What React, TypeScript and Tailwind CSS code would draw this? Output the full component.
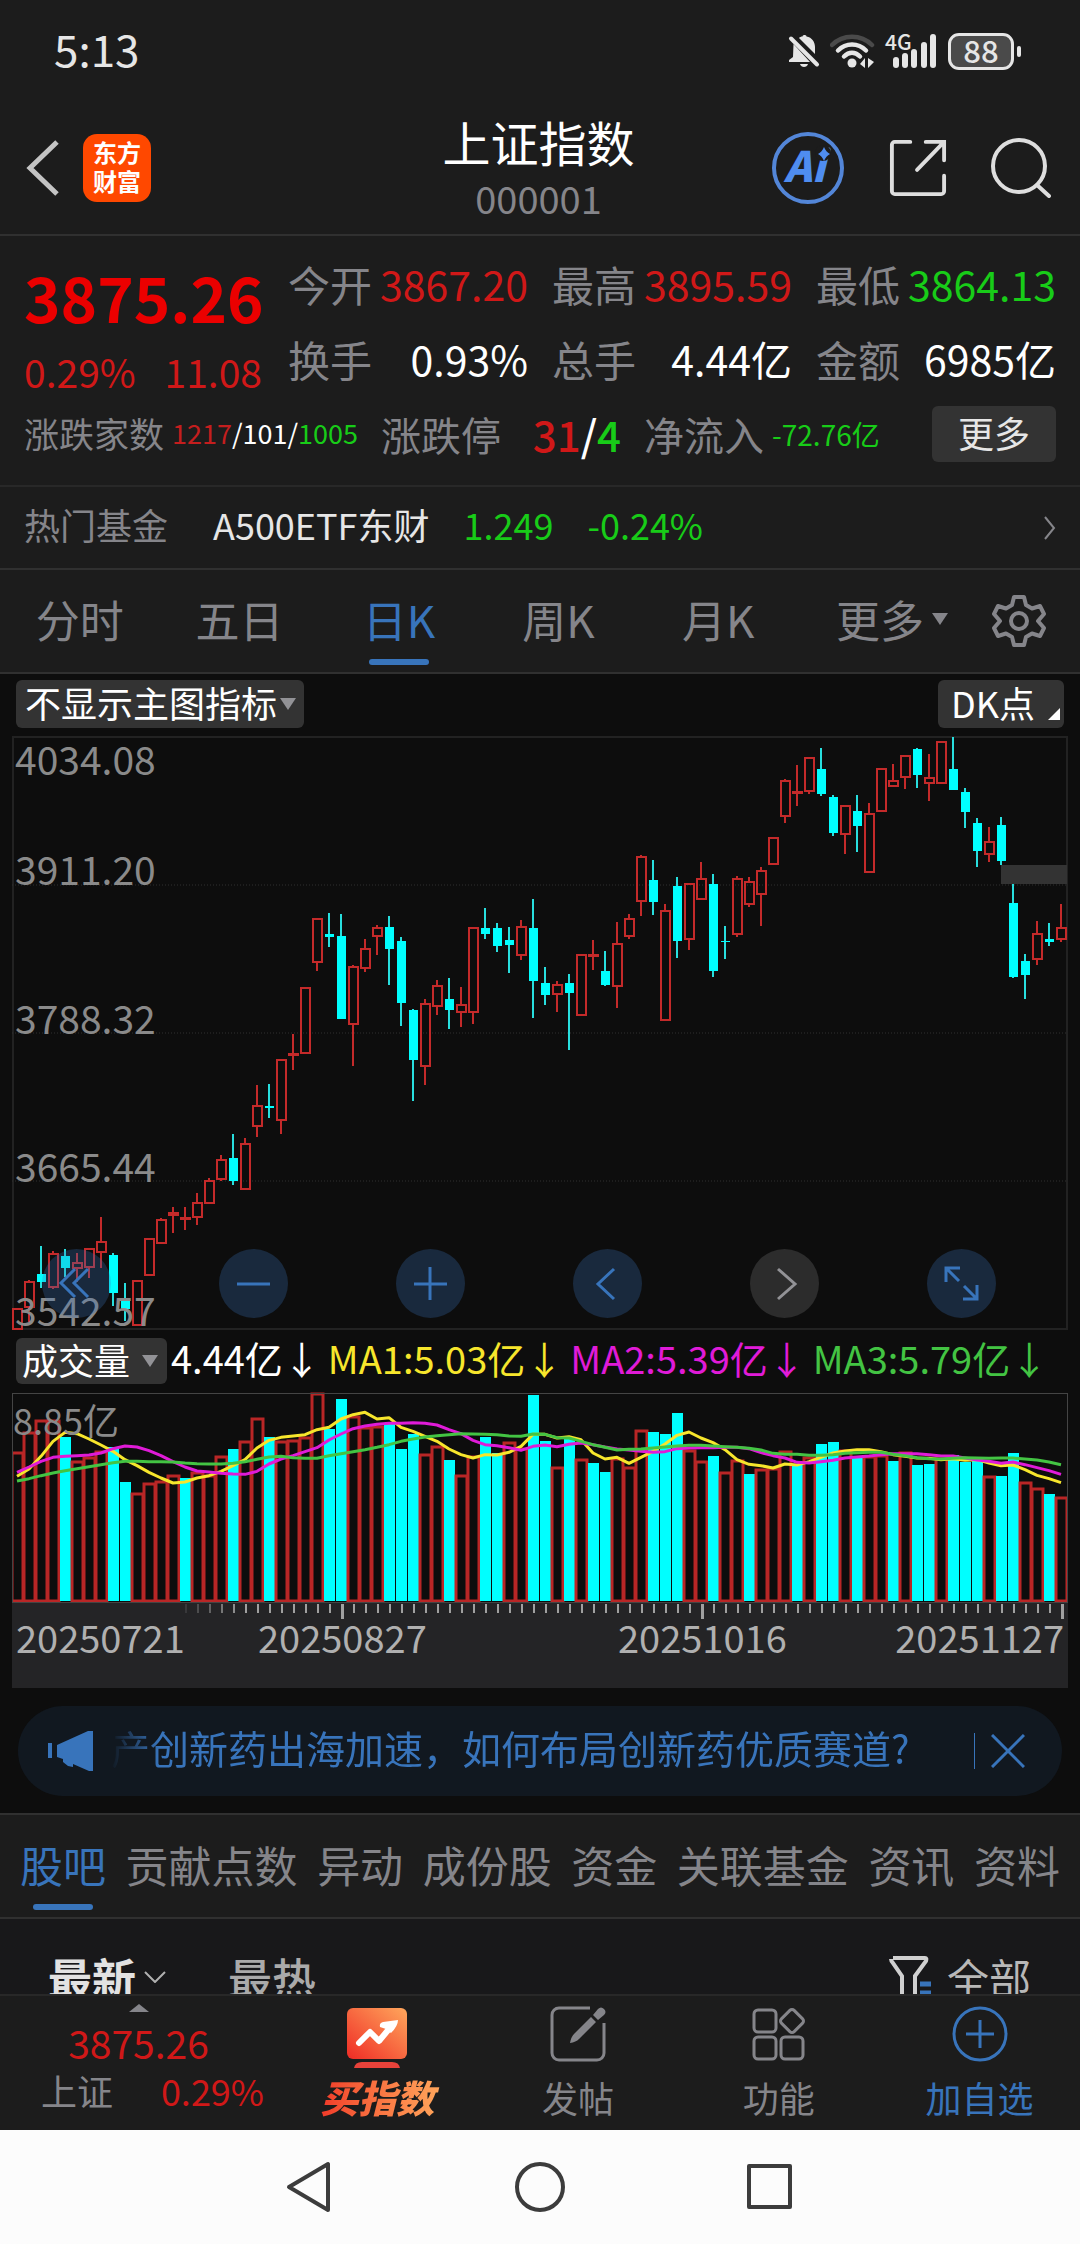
import React, { useState } from 'react';

// [涨/跌, 最高, 实体上沿, 实体下沿, 最低]，数值为距离图表顶部的刻度
type Candle = ['r' | 'c', number, number, number, number];

const CANDLES: Candle[] = [
    ['r', 1488, 1488, 1540, 1540], ['r', 1412, 1418, 1482, 1520], ['c', 1325, 1398, 1419, 1433], ['r', 1338, 1346, 1432, 1436],
    ['c', 1334, 1351, 1383, 1405], ['r', 1345, 1370, 1382, 1418], ['r', 1330, 1333, 1380, 1408], ['r', 1252, 1315, 1340, 1383],
    ['c', 1344, 1350, 1446, 1480], ['c', 1421, 1466, 1487, 1519], ['r', 1412, 1416, 1529, 1530], ['r', 1306, 1309, 1400, 1403],
    ['r', 1255, 1258, 1317, 1320], ['r', 1225, 1242, 1247, 1293], ['r', 1225, 1255, 1257, 1285], ['r', 1189, 1216, 1250, 1271],
    ['r', 1151, 1158, 1216, 1216], ['r', 1091, 1105, 1153, 1158], ['c', 1039, 1100, 1158, 1170], ['r', 1047, 1064, 1180, 1183],
    ['r', 912, 966, 1017, 1046], ['c', 910, 966, 970, 997], ['r', 845, 849, 1003, 1037], ['r', 781, 833, 835, 873],
    ['r', 663, 663, 831, 831], ['r', 483, 485, 596, 619], ['c', 470, 523, 531, 558], ['c', 474, 528, 742, 742],
    ['r', 604, 608, 755, 864], ['r', 536, 563, 612, 621], ['r', 500, 508, 528, 577], ['c', 479, 505, 563, 655],
    ['c', 532, 542, 702, 760], ['c', 717, 720, 849, 953], ['r', 691, 704, 863, 913], ['r', 642, 659, 710, 733],
    ['c', 637, 692, 720, 769], ['r', 661, 706, 725, 762], ['r', 508, 510, 725, 755], ['c', 457, 510, 523, 536],
    ['c', 497, 508, 556, 571], ['c', 506, 540, 552, 625], ['r', 488, 506, 578, 591], ['c', 434, 508, 645, 740],
    ['c', 610, 650, 681, 707], ['r', 646, 654, 678, 724], ['c', 626, 650, 676, 823], ['r', 575, 577, 731, 731],
    ['r', 539, 578, 581, 617], ['c', 569, 620, 656, 657], ['r', 493, 549, 658, 714], ['r', 474, 485, 528, 538],
    ['r', 322, 327, 440, 477], ['c', 333, 386, 442, 476], ['r', 447, 466, 744, 746], ['c', 377, 401, 541, 585],
    ['r', 394, 396, 536, 566], ['r', 338, 382, 433, 436], ['c', 369, 396, 620, 634], ['c', 503, 541, 545, 588],
    ['r', 375, 382, 525, 531], ['r', 377, 390, 448, 454], ['r', 353, 363, 422, 504], ['r', 275, 277, 345, 346],
    ['r', 127, 131, 221, 238], ['r', 91, 160, 163, 195], ['r', 71, 73, 156, 164], ['c', 45, 100, 164, 170],
    ['c', 166, 171, 264, 272], ['r', 194, 196, 268, 319], ['c', 168, 207, 247, 314], ['r', 187, 217, 366, 367],
    ['r', 97, 99, 208, 209], ['r', 87, 131, 143, 144], ['r', 64, 66, 120, 152], ['c', 46, 50, 115, 149],
    ['r', 61, 123, 135, 183], ['r', 30, 32, 136, 139], ['c', 18, 101, 153, 154], ['c', 148, 159, 210, 251],
    ['c', 226, 240, 310, 351], ['r', 248, 287, 318, 339], ['c', 224, 245, 337, 348], ['c', 396, 445, 635, 637],
    ['c', 576, 594, 630, 691], ['r', 490, 525, 588, 603], ['c', 497, 536, 545, 554], ['r', 447, 508, 538, 544],
];

const VOLUMES = [
    367, 308, 270, 270, 322, 393, 382, 365, 353, 456, 490, 461, 453, 436, 445, 428, 435, 380, 357, 335, 265, 323,
    335, 330, 322, 190, 297, 208, 258, 292, 290, 283, 359, 314, 372, 348, 391, 436, 380, 322, 370, 338, 355, 196,
    333, 411, 325, 387, 399, 426, 385, 411, 300, 307, 313, 249, 360, 393, 379, 426, 390, 432, 418, 415, 363, 405,
    383, 343, 337, 360, 380, 380, 375, 393, 366, 405, 402, 385, 376, 398, 395, 438, 438, 369, 458, 476, 492, 502,
];

// 下跌日的序号
const DOWN_DAYS = [
    4, 8, 9, 14, 18, 21, 26, 27, 31, 32, 33, 36, 39, 40, 43, 44, 46, 48, 49, 53, 54, 55, 58, 61, 65, 67, 68, 70, 73,
    75, 76, 78, 79, 80, 82, 83, 86,
];

const MA1 = [
    440, 418, 380, 335, 308, 312, 328, 346, 365, 390, 408, 428, 445, 460, 457, 445, 438, 425, 408, 390, 355, 332,
    323, 319, 315, 300, 293, 268, 255, 248, 268, 264, 293, 305, 320, 335, 358, 375, 385, 375, 376, 368, 350, 314,
    314, 325, 321, 330, 370, 388, 383, 401, 383, 365, 343, 317, 307, 325, 339, 360, 390, 404, 408, 415, 403, 406,
    396, 383, 370, 364, 360, 360, 366, 375, 380, 385, 386, 390, 387, 392, 390, 400, 408, 406, 420, 437, 447, 459,
];

const MA2 = [
    428, 412, 395, 383, 380, 378, 376, 370, 357, 349, 352, 363, 378, 396, 412, 424, 427, 431, 433, 434, 425, 403,
    388, 378, 366, 354, 331, 313, 297, 289, 284, 281, 281, 279, 281, 286, 300, 312, 332, 345, 348, 354, 362, 350,
    346, 351, 344, 340, 345, 352, 358, 361, 365, 368, 366, 357, 355, 354, 354, 353, 353, 357, 369, 378, 385, 398,
    400, 396, 392, 385, 382, 379, 375, 372, 372, 372, 375, 379, 379, 385, 391, 395, 401, 397, 405, 414, 423, 434,
];

const MA3 = [
    454, 447, 438, 430, 423, 417, 411, 405, 399, 395, 395, 396, 396, 397, 400, 402, 403, 403, 401, 396, 389, 382,
    380, 384, 386, 386, 378, 372, 366, 360, 353, 345, 335, 328, 322, 318, 315, 312, 313, 314, 315, 319, 320, 313,
    314, 324, 325, 335, 345, 353, 361, 359, 358, 355, 352, 349, 347, 347, 349, 351, 353, 356, 361, 371, 374, 374,
    377, 377, 375, 371, 369, 368, 368, 374, 378, 384, 387, 388, 386, 384, 385, 386, 385, 385, 388, 391, 397, 405,
];

const GRID = [
    { y: 39, label: '4034.08' },
    { y: 149, label: '3911.20' },
    { y: 298, label: '3788.32' },
    { y: 446, label: '3665.44' },
    { y: 590, label: '3542.57' },
];

const PERIODS = ['分时', '五日', '日K', '周K', '月K'];
const SECTIONS = ['股吧', '贡献点数', '异动', '成份股', '资金', '关联基金', '资讯', '资料'];

const centerX = (i: number) => 5 + i * 12;
const priceY = (v: number) => Math.round(1 + ((v - 18) * 592) / 1521);
const volumeY = (v: number) => Math.round((v - 187) / 3);
const toPoints = (values: number[]) => values.map((v, i) => `${centerX(i)},${(v - 187) / 3}`).join(' ');

const StatusBar: React.FC = () => (
    <div className="flex h-[102px] items-center justify-between pl-[54px] pr-[59px] text-[#e6e6e6]">
        <span className="pb-[6px] text-[44px] leading-[64px]">5:13</span>
        <div className="flex items-center">
            <svg className="h-9 w-8" viewBox="0 0 32 36" fill="currentColor">
                <path d="M11 5c1-1 2-1.500 3.500-1.500 0-2 4-2 4 0C24 4.500 27 9 27 14v7z" />
                <path d="M5.500 11 22 29H1v-2l4-3z" />
                <path d="M12 31h8c-1 4-7 4-8 0z" />
                <path d="M3 5.500 29 31.500" stroke="currentColor" strokeWidth="4" strokeLinecap="round" />
            </svg>
            <svg className="ml-[10px] h-9 w-[45px]" viewBox="0 0 45 36" fill="none" stroke="currentColor" strokeWidth="4.500">
                <path d="M2 12C13 1 31 1 42 12" stroke="#4a4a4a" strokeLinecap="round" />
                <path d="M8 17.500c8-8 20-8 28 0M14 23.500c5-5 11-5 16 0" strokeLinecap="round" />
                <circle cx="22" cy="30" r="4.500" fill="currentColor" stroke="none" />
                <path d="M35 25v10l-5-4zM38 25v10l6-6z" fill="currentColor" stroke="none" />
            </svg>
            <svg className="ml-[10px] h-9 w-[52px] overflow-visible" viewBox="0 0 52 36" fill="currentColor">
                <text x="0" y="17" fontSize="21" fontWeight="500">4G</text>
                <rect x="8" y="24" width="6" height="11" rx="3" />
                <rect x="17" y="20" width="6" height="15" rx="3" />
                <rect x="26" y="16" width="6" height="19" rx="3" />
                <rect x="36" y="9" width="6" height="26" rx="3" />
                <rect x="45" y="1" width="6" height="34" rx="3" />
            </svg>
            <span className="ml-[11px] flex h-[37px] w-[66px] items-center justify-center rounded-[11px] border-[3px] border-[#e6e6e6] bg-[#4a4a4a] pb-1 text-[31px] font-medium leading-none">
                88
            </span>
            <span className="ml-[3px] h-[11px] w-1 rounded-full bg-[#e6e6e6]" />
        </div>
    </div>
);

const Header: React.FC = () => (
    <header className="grid h-[134px] grid-cols-[1fr_auto_1fr] items-center border-b-2 border-[#303030] pl-[26px] pr-[29px]">
        <div className="flex items-center gap-[23px]">
            <button type="button" aria-label="返回" className="text-[#c4c4c4]">
                <svg className="h-14 w-[34px]" viewBox="0 0 34 56" fill="none" stroke="currentColor" strokeWidth="5">
                    <path d="M31 2 4 28l27 26" />
                </svg>
            </button>
            <a href="#home" className="flex h-[68px] w-[68px] flex-col items-center justify-center rounded-[14px] bg-[#ff4800] pb-1 text-[24px] font-bold leading-[29px] text-white">
                <span>东方</span>
                <span>财富</span>
            </a>
        </div>
        <div className="flex flex-col items-center">
            <h1 className="text-[48px] leading-[60px] text-white">上证指数</h1>
            <p className="text-[38px] leading-[54px] text-[#85858a]">000001</p>
        </div>
        <div className="flex items-center justify-end gap-11 text-[#dedede]">
            <button type="button" aria-label="智能助手" className="text-[#4f8df0]">
                <svg className="h-[74px] w-[74px]" viewBox="0 0 74 74">
                    <circle cx="37" cy="37" r="34" fill="none" stroke="#5386d8" strokeWidth="4" />
                    <text x="13" y="51" fontSize="42" fontWeight="900" fontStyle="italic" fill="currentColor">Ai</text>
                    <circle cx="52" cy="22" r="8" fill="#1c1c1c" />
                    <path d="M53 16q2 5 6 7-4 2-6 7-2-5-6-7 4-2 6-7z" fill="currentColor" />
                </svg>
            </button>
            <button type="button" aria-label="分享">
                <svg className="h-[58px] w-[58px]" viewBox="0 0 60 60" fill="none" stroke="currentColor" strokeWidth="4" strokeLinecap="round">
                    <path d="M22 3H6a3 3 0 0 0-3 3v48a3 3 0 0 0 3 3h48a3 3 0 0 0 3-3V38M38 3h19v19M56 4 29 32" />
                </svg>
            </button>
            <button type="button" aria-label="搜索">
                <svg className="h-[60px] w-[60px]" viewBox="0 0 60 60" fill="none" stroke="currentColor" strokeWidth="4" strokeLinecap="round">
                    <circle cx="28" cy="28" r="26" />
                    <path d="m46 47 12 11" />
                </svg>
            </button>
        </div>
    </header>
);

const Field: React.FC<{ label: string; value: string; color: string }> = ({ label, value, color }) => (
    <div className="flex justify-between">
        <dt className="text-[42px] text-[#85858a]">{label}</dt>
        <dd className={color}>{value}</dd>
    </div>
);

const Quote: React.FC = () => (
    <section className="border-b-2 border-[#282828] px-6 pb-[14px] pt-[10px]">
        <div className="flex justify-between">
            <div className="w-[238px]">
                <div className="text-[62px] font-bold leading-[100px] text-[#eb0000]">3875.26</div>
                <div className="flex justify-between text-[39px] leading-[50px] text-[#d01818]">
                    <span>0.29%</span>
                    <span>11.08</span>
                </div>
            </div>
            <dl className="grid w-[768px] grid-cols-3 gap-x-6 text-[41px] leading-[75px]">
                <Field label="今开" value="3867.20" color="text-[#d01818]" />
                <Field label="最高" value="3895.59" color="text-[#d01818]" />
                <Field label="最低" value="3864.13" color="text-[#18cc18]" />
                <Field label="换手" value="0.93%" color="text-white" />
                <Field label="总手" value="4.44亿" color="text-white" />
                <Field label="金额" value="6985亿" color="text-white" />
            </dl>
        </div>
        <div className="flex h-[75px] items-center gap-[23px] text-[#85858a]">
            <div className="flex items-center gap-2">
                <span className="text-[35px]">涨跌家数</span>
                <span className="text-[27px] text-white">
                    <span className="text-[#c41e1e]">1217</span>/101/<span className="text-[#18cc18]">1005</span>
                </span>
            </div>
            <div className="flex w-[240px] items-center justify-between">
                <span className="text-[40px]">涨跌停</span>
                <span className="text-[42px] font-medium text-white">
                    <span className="text-[#d01818]">31</span>/<span className="text-[#18cc18]">4</span>
                </span>
            </div>
            <div className="flex items-center gap-2">
                <span className="text-[40px]">净流入</span>
                <span className="text-[28px] text-[#18cc18]">-72.76亿</span>
            </div>
            <button type="button" className="ml-auto h-14 w-[124px] rounded-[6px] bg-[#333333] pb-1 text-[36px] leading-[52px] text-[#e6e6e6]">
                更多
            </button>
        </div>
    </section>
);

const HotFund: React.FC = () => (
    <a href="#fund" className="flex h-[83px] items-center border-b-2 border-[#303030] px-6 text-[36px] leading-[54px]">
        <span className="pb-2 text-[#85858a]">热门基金</span>
        <span className="ml-[45px] pb-2 text-[#e6e6e6]">A500ETF东财</span>
        <span className="ml-[34px] pb-2 text-[#18cc18]">1.249</span>
        <span className="ml-[34px] pb-2 text-[#18cc18]">-0.24%</span>
        <svg className="ml-auto h-6 w-3" viewBox="0 0 12 24" fill="none" stroke="#85858a" strokeWidth="2">
            <path d="m1 1 9 11-9 11" />
        </svg>
    </a>
);

const PeriodTabs: React.FC = () => {
    const [active, setActive] = useState('日K');

    return (
        <nav className="flex h-[104px] items-center border-b-2 border-[#303030] pr-[34px] text-[44px] leading-[64px] text-[#85858a]">
            {PERIODS.map(name => (
                <button
                    key={name}
                    type="button"
                    onClick={() => setActive(name)}
                    className={`relative h-full flex-1 pb-1 ${active === name ? 'text-[#3874bb]' : ''}`}
                >
                    {name}
                    {active === name && (
                        <span className="absolute bottom-[7px] left-1/2 h-[6px] w-[60px] -translate-x-1/2 rounded-full bg-[#3874bb]" />
                    )}
                </button>
            ))}
            <button type="button" className="flex h-full w-[194px] items-center justify-center gap-2 pb-1 pr-[6px]">
                更多
                <svg className="h-3 w-4" viewBox="0 0 16 12" fill="currentColor"><path d="M0 0h16L8 12z" /></svg>
            </button>
            <button type="button" aria-label="设置">
                <svg className="h-[54px] w-[54px]" viewBox="0 0 54 54" fill="none" stroke="currentColor" strokeWidth="4" strokeLinejoin="round">
                    <path d="M22 3h10l2 8 6 3.500 8-2.500 4 8-6 7 6 7-4 8-8-2.500-6 3.500-2 8H22l-2-8-6-3.500-8 2.500-4-8 6-7-6-7 4-8 8 2.500 6-3.500z" />
                    <circle cx="27" cy="27" r="8" />
                </svg>
            </button>
        </nav>
    );
};

const CandleChart: React.FC = () => (
    <div className="relative mx-3 mt-2">
        <svg className="block h-auto w-full overflow-visible" viewBox="0 0 1056 594" role="img" aria-label="日K线">
            <rect x="1" y="1" width="1054" height="592" fill="none" stroke="#222222" strokeWidth="2" />
            {[149, 297, 445].map(y => (
                <line key={y} x1="0" x2="1056" y1={y} y2={y} stroke="#303030" strokeDasharray="1 2" />
            ))}
            <rect x="989" y="129" width="66" height="19" fill="#333333" />
            {CANDLES.map(([dir, high, top, bottom, low], i) => {
                const x = centerX(i);
                const y1 = priceY(top);
                const y2 = priceY(bottom);
                if (dir === 'c') {
                    return (
                        <g key={i}>
                            <line x1={x} x2={x} y1={priceY(high)} y2={priceY(low)} stroke="#28dede" strokeWidth="2" />
                            <rect x={x - 4} y={y1} width="9" height={y2 - y1} fill="#00ffff" />
                        </g>
                    );
                }
                return (
                    <g key={i} fill="none" stroke="#c42a2a" strokeWidth="2">
                        <path d={`M${x} ${priceY(high)}V${y1}M${x} ${y2}V${priceY(low)}`} />
                        <rect x={x - 4} y={y1} width="9" height={y2 - y1} />
                    </g>
                );
            })}
            {GRID.map(({ y, label }) => (
                <text key={label} x="3" y={y} fontSize="39" fill="#8a8a8a">{label}</text>
            ))}
        </svg>
        <div className="absolute inset-x-0 bottom-3 flex justify-between pl-[30px] pr-[72px] text-[#3874bb]">
            <ChartButton label="最早"><path d="M33 20 19 34l14 14M46 20 32 34l14 14" /></ChartButton>
            <ChartButton label="缩小"><path d="M18 35h33" /></ChartButton>
            <ChartButton label="放大"><path d="M18 35h33M34 18v33" /></ChartButton>
            <ChartButton label="向前"><path d="M41 20 25 35l16 15" /></ChartButton>
            <ChartButton label="向后" disabled><path d="m28 20 17 15-17 15" /></ChartButton>
            <ChartButton label="全屏">
                <path d="M19 33V19h14M20 20l12 12M50 36v14H36M49 49 37 37" />
            </ChartButton>
        </div>
    </div>
);

const ChartButton: React.FC<{ label: string; disabled?: boolean; children: React.ReactNode }> = ({ label, disabled, children }) => (
    <button
        type="button"
        aria-label={label}
        disabled={disabled}
        className={`rounded-full ${disabled ? 'bg-[#2c2c2c] text-[#929296]' : 'bg-[#3874bb]/28'}`}
    >
        <svg className="h-[69px] w-[69px]" viewBox="0 0 69 69" fill="none" stroke="currentColor" strokeWidth="3">
            {children}
        </svg>
    </button>
);

const VolumeChart: React.FC = () => (
    <div className="mx-3 mt-2">
        <svg className="block h-auto w-full" viewBox="0 0 1056 211" role="img" aria-label="成交量">
            {VOLUMES.map((v, i) => {
                const x = centerX(i);
                const y = volumeY(v);
                return DOWN_DAYS.includes(i)
                    ? <rect key={i} x={x - 5} y={y} width="11" height={209 - y} fill="#00ffff" />
                    : <rect key={i} x={x - 5} y={y + 1} width="11" height={208 - y} fill="none" stroke="#b92626" strokeWidth="3" />;
            })}
            <rect x="0.500" y="1.500" width="1055" height="209" fill="none" stroke="#444444" />
            <g fill="none" strokeWidth="3" strokeLinejoin="round">
                <polyline points={toPoints(MA1)} stroke="#f7e62c" />
                <polyline points={toPoints(MA2)} stroke="#e01bd8" />
                <polyline points={toPoints(MA3)} stroke="#43c443" />
            </g>
            <text x="1" y="43" fontSize="36" fill="#8a8a8a">8.85亿</text>
        </svg>
        <div className="h-[85px] bg-[#242426]">
            <svg className="block h-auto w-full" viewBox="0 0 1056 16">
                {VOLUMES.map((_, i) => {
                    const major = i === 27 || i === 57 || i === 87;
                    return (
                        <rect
                            key={i}
                            x={centerX(i)}
                            y="1"
                            width={major ? 3 : 2}
                            height={major ? 15 : 9}
                            fill="#a0a0a0"
                            opacity={Math.min(1, Math.max(0, (i - 13) / 6))}
                        />
                    );
                })}
            </svg>
            <div className="flex px-1 text-[38px] leading-[36px] text-[#b0b0b0]">
                <span className="w-[242px]">20250721</span>
                <span className="w-[360px]">20250827</span>
                <span className="flex-1">20251016</span>
                <span>20251127</span>
            </div>
        </div>
    </div>
);

const Notice: React.FC = () => (
    <div className="mx-[18px] mb-[17px] mt-[18px] flex h-[90px] items-center rounded-full bg-[#111820] pl-[30px] pr-[37px] text-[#3874bb]">
        <svg className="h-10 w-[45px]" viewBox="0 0 45 40" fill="currentColor">
            <path d="M0 12h4v15H0zM9 14 40 0h5v40h-4l-16-7v3l-5-1-5-4v-3l-6-2z" />
        </svg>
        <a href="#notice" className="ml-[18px] flex-1 overflow-hidden whitespace-nowrap pb-2 text-[39px] leading-[60px] [mask-image:linear-gradient(to_right,transparent,black_48px)]">
            产创新药出海加速，如何布局创新药优质赛道?
        </a>
        <span className="mr-4 h-9 w-px bg-[#3874bb]" />
        <button type="button" aria-label="关闭">
            <svg className="h-[34px] w-[34px]" viewBox="0 0 34 34" fill="none" stroke="currentColor" strokeWidth="3">
                <path d="m1 1 32 32M33 1 1 33" />
            </svg>
        </button>
    </div>
);

const SectionTabs: React.FC = () => {
    const [active, setActive] = useState('股吧');

    return (
        <nav className="flex h-[106px] justify-between border-y-2 border-[#303030] bg-[#1c1c1c] px-5 text-[43px] leading-[64px] text-[#85858a]">
            {SECTIONS.map(name => (
                <button
                    key={name}
                    type="button"
                    onClick={() => setActive(name)}
                    className={`relative h-full whitespace-nowrap pb-1 ${active === name ? 'text-[#3874bb]' : ''}`}
                >
                    {name}
                    {active === name && (
                        <span className="absolute bottom-[7px] left-1/2 h-[6px] w-[60px] -translate-x-1/2 rounded-full bg-[#3874bb]" />
                    )}
                </button>
            ))}
        </nav>
    );
};

const PostFilter: React.FC = () => (
    <div className="flex h-[75px] items-start overflow-hidden bg-[#18181a] pl-12 pr-[49px] pt-7 text-[44px] leading-[60px]">
        <button type="button" className="flex items-center gap-[8px] font-bold text-[#e2e2e2]">
            最新
            <svg className="h-3 w-[22px]" viewBox="0 0 22 12" fill="none" stroke="#b0b0b0" strokeWidth="2">
                <path d="m1 1 10 10L21 1" />
            </svg>
        </button>
        <button type="button" className="ml-[62px] font-medium text-[#aaaaaa]">最热</button>
        <button type="button" className="ml-auto flex items-center gap-4 text-[42px] text-[#b8b8b8]">
            <svg className="h-[46px] w-[42px]" viewBox="0 0 42 46" fill="none">
                <path d="M4 4h32q2 0 1 3L26 22v22M2 5q0 2 2 4l9 13v22" stroke="#d0d0d0" strokeWidth="4" />
                <path d="M31 30h11M31 39h11" stroke="#3874bb" strokeWidth="5" />
            </svg>
            全部
        </button>
    </div>
);

const BottomBar: React.FC = () => (
    <footer className="grid h-[136px] grid-cols-[277px_repeat(4,1fr)] border-t-2 border-[#282828] bg-[#1c1c1c] text-[36px] leading-[48px] text-[#85858a]">
        <button type="button" className="flex flex-col items-center pt-2">
            <svg className="h-2 w-5" viewBox="0 0 20 8" fill="currentColor"><path d="M10 0 20 8H0z" /></svg>
            <span className="mt-[6px] text-[39px] text-[#d01818]">3875.26</span>
            <span className="flex w-full justify-between pl-[41px] pr-[13px]">
                上证<span className="text-[#d01818]">0.29%</span>
            </span>
        </button>
        <button type="button" className="flex flex-col items-center gap-1 pt-3">
            <svg className="h-[61px] w-[60px]" viewBox="0 0 60 61">
                <defs>
                    <linearGradient id="fire" x1="0" y1="1" x2="1" y2="0">
                        <stop offset="0" stopColor="#ef2b25" />
                        <stop offset="1" stopColor="#ffa75c" />
                    </linearGradient>
                </defs>
                <rect width="60" height="51" rx="6" fill="url(#fire)" />
                <path d="M7 60q1-6 8-6h30q7 0 8 6z" fill="#e8423a" />
                <path d="m12 35 11-11 9 9 10-12" fill="none" stroke="#ffffff" strokeWidth="6" strokeLinecap="round" strokeLinejoin="round" />
                <path d="M36 14 51 12q0 6-7 13l-5-4-6-2q-1-4 3-5z" fill="#ffffff" />
            </svg>
            <span className="bg-gradient-to-r from-[#ef2b25] to-[#ffa75c] bg-clip-text px-2 text-[38px] font-black italic text-transparent">
                买指数
            </span>
        </button>
        <button type="button" className="flex flex-col items-center gap-[11px] pt-[10px]">
            <svg className="h-14 w-14" viewBox="0 0 56 56" fill="none" stroke="currentColor" strokeWidth="3">
                <path d="M40 2H9a7 7 0 0 0-7 7v38a7 7 0 0 0 7 7h38a7 7 0 0 0 7-7V17" />
                <path d="M20 37q1-6 4-9l17-17 5 5-17 17q-3 3-9 4zM43 9l5-6q3-3 6 0t0 6l-6 5z" fill="currentColor" stroke="none" />
            </svg>
            发帖
        </button>
        <button type="button" className="flex flex-col items-center gap-[11px] pt-[10px]">
            <svg className="h-14 w-14" viewBox="0 0 56 56" fill="none" stroke="currentColor" strokeWidth="3">
                <rect x="3" y="4" width="22" height="22" rx="4" />
                <rect x="3" y="31" width="22" height="22" rx="4" />
                <rect x="30" y="31" width="22" height="22" rx="4" />
                <rect x="32" y="6" width="18" height="18" rx="3" transform="rotate(45 41 15)" />
            </svg>
            功能
        </button>
        <button type="button" className="flex flex-col items-center gap-[11px] pt-[10px] text-[#3874bb]">
            <svg className="h-14 w-14" viewBox="0 0 56 56" fill="none" stroke="currentColor" strokeWidth="3">
                <circle cx="28" cy="28" r="26" />
                <path d="M14 28h28M28 14v28" />
            </svg>
            加自选
        </button>
    </footer>
);

const SystemNav: React.FC = () => (
    <div className="flex h-[114px] items-center justify-center gap-[178px] bg-[#fcfcfc] text-[#3c3c3c]">
        <button type="button" aria-label="后退">
            <svg className="h-[52px] w-[52px]" viewBox="0 0 52 52" fill="none" stroke="currentColor" strokeWidth="4" strokeLinejoin="round">
                <path d="M44 3v46L5 26z" />
            </svg>
        </button>
        <button type="button" aria-label="主屏幕">
            <svg className="h-[52px] w-[52px]" viewBox="0 0 52 52" fill="none" stroke="currentColor" strokeWidth="4">
                <circle cx="26" cy="26" r="23" />
            </svg>
        </button>
        <button type="button" aria-label="最近任务">
            <svg className="h-[52px] w-[52px]" viewBox="0 0 52 52" fill="none" stroke="currentColor" strokeWidth="4" strokeLinejoin="round">
                <rect x="5" y="5" width="41" height="41" />
            </svg>
        </button>
    </div>
);

const App: React.FC = () => (
    <div className="min-h-screen bg-[#1c1c1c] font-['Noto_Sans_CJK_SC',sans-serif]">
        <StatusBar />
        <Header />
        <Quote />
        <HotFund />
        <PeriodTabs />
        <main className="overflow-hidden bg-[#0d0d0d] pt-[6px]">
            <div className="flex items-center justify-between pl-4 pr-4 text-[36px] leading-[48px] text-white">
                <label className="relative">
                    <span className="sr-only">主图指标</span>
                    <select className="block h-12 w-[288px] appearance-none rounded-[6px] bg-[#333333] pb-1 pl-[9px] leading-[44px]">
                        <option>不显示主图指标</option>
                    </select>
                    <svg className="pointer-events-none absolute right-2 top-[18px] h-3 w-4" viewBox="0 0 16 12" fill="#929296"><path d="M0 0h16L8 12z" /></svg>
                </label>
                <button type="button" className="flex h-12 w-[126px] items-center justify-between rounded-[6px] bg-[#333333] pb-1 pl-[13px] pr-1">
                    DK点
                    <svg className="mt-6 h-3 w-3" viewBox="0 0 12 12" fill="currentColor"><path d="M12 0v12H0z" /></svg>
                </button>
            </div>
            <CandleChart />
            <div className="mt-2 flex h-[46px] items-center gap-1 pl-4 leading-[46px]">
                <label className="relative">
                    <span className="sr-only">副图指标</span>
                    <select className="block h-[46px] w-[151px] appearance-none rounded-[6px] bg-[#333333] pb-1 pl-[6px] text-[36px] leading-[42px] text-white">
                        <option>成交量</option>
                    </select>
                    <svg className="pointer-events-none absolute right-[9px] top-[17px] h-3 w-4" viewBox="0 0 16 12" fill="#929296"><path d="M0 0h16L8 12z" /></svg>
                </label>
                <div className="flex gap-[7px] pb-[6px] text-[38px]">
                    <span className="text-white">4.44亿↓</span>
                    <span className="text-[#f7e62c]">MA1:5.03亿↓</span>
                    <span className="text-[#e01bd8]">MA2:5.39亿↓</span>
                    <span className="text-[#43c443]">MA3:5.79亿↓</span>
                </div>
            </div>
            <VolumeChart />
            <Notice />
            <SectionTabs />
            <PostFilter />
        </main>
        <BottomBar />
        <SystemNav />
    </div>
);

export default App;
